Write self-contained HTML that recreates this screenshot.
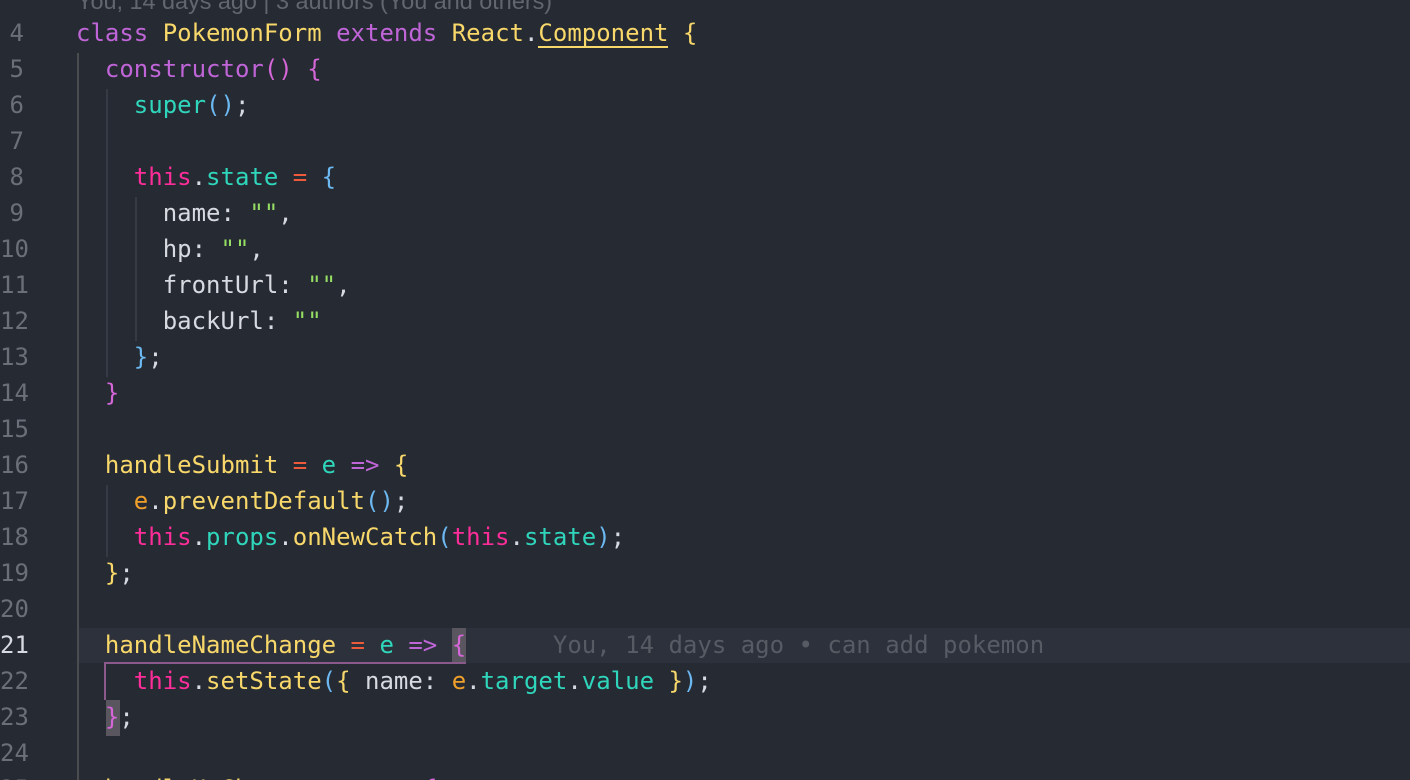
<!DOCTYPE html>
<html><head><meta charset="utf-8"><style>
html,body{margin:0;padding:0;background:#262a33;width:1410px;height:780px;overflow:hidden}
body{position:relative;font-family:"DejaVu Sans Mono","Liberation Mono",monospace;font-size:24px;color:#d7dae0}
.ln{position:absolute;left:0;width:24px;text-align:right;color:#6b6f78;height:36px;line-height:36px;font-family:"DejaVu Sans Mono","Liberation Mono",monospace}
.c{position:absolute;left:76px;height:36px;line-height:36px;white-space:pre;letter-spacing:0}
.k{color:#c065d8}.y{color:#f8d86a}.t{color:#2fd6bb}.p{color:#ff2d9a}.o{color:#ee5b3a}.e{color:#f0a02a}.s{color:#95de64}.b{color:#6cb8f0}.m{color:#d466d8}.w{color:#d7dae0}
.g{position:absolute;width:2px}
</style></head><body>
<div style="position:absolute;left:77px;top:628px;width:1333px;height:35px;background:#2d313b"></div>
<div style="position:absolute;left:77px;top:-17px;height:36px;line-height:36px;font-family:'Liberation Sans',sans-serif;font-size:23.4px;color:#62666f;white-space:pre">You, 14 days ago | 3 authors (You and others)</div>
<div class="g" style="left:77px;top:53px;height:727px;background:#4b4c50"></div>
<div class="g" style="left:106px;top:89px;height:288px;background:#363a44"></div>
<div class="g" style="left:106px;top:485px;height:72px;background:#363a44"></div>
<div class="g" style="left:135px;top:197px;height:144px;background:#363a44"></div>
<div style="position:absolute;left:452px;top:628px;width:14px;height:35px;background:#5a5660"></div>
<div style="position:absolute;left:106px;top:700px;width:14px;height:36px;background:#5a5660"></div>
<div style="position:absolute;left:104px;top:662px;width:362px;height:2px;background:#8a5a8c"></div>
<div style="position:absolute;left:104px;top:662px;width:2px;height:38px;background:#8a5a8c"></div>
<div style="position:absolute;left:538px;top:46px;width:130px;height:2px;background:#f8d86a"></div>

<div class="ln" style="top:15px">4</div><div class="c" style="top:15px"><span class="k">class</span> <span class="y">PokemonForm</span> <span class="k">extends</span> <span class="y">React</span>.<span class="y">Component</span> <span class="y">{</span></div>
<div class="ln" style="top:51px">5</div><div class="c" style="top:51px">  <span class="k">constructor</span><span class="m">()</span> <span class="m">{</span></div>
<div class="ln" style="top:87px">6</div><div class="c" style="top:87px">    <span class="t">super</span><span class="b">()</span>;</div>
<div class="ln" style="top:123px">7</div>
<div class="ln" style="top:159px">8</div><div class="c" style="top:159px">    <span class="p">this</span>.<span class="t">state</span> <span class="o">=</span> <span class="b">{</span></div>
<div class="ln" style="top:195px">9</div><div class="c" style="top:195px">      name: <span class="s">""</span>,</div>
<div class="ln" style="top:231px">10</div><div class="c" style="top:231px">      hp: <span class="s">""</span>,</div>
<div class="ln" style="top:267px">11</div><div class="c" style="top:267px">      frontUrl: <span class="s">""</span>,</div>
<div class="ln" style="top:303px">12</div><div class="c" style="top:303px">      backUrl: <span class="s">""</span></div>
<div class="ln" style="top:339px">13</div><div class="c" style="top:339px">    <span class="b">}</span>;</div>
<div class="ln" style="top:375px">14</div><div class="c" style="top:375px">  <span class="m">}</span></div>
<div class="ln" style="top:411px">15</div>
<div class="ln" style="top:447px">16</div><div class="c" style="top:447px">  <span class="y">handleSubmit</span> <span class="o">=</span> <span class="t">e</span> <span class="k">=&gt;</span> <span class="y">{</span></div>
<div class="ln" style="top:483px">17</div><div class="c" style="top:483px">    <span class="e">e</span>.<span class="y">preventDefault</span><span class="b">()</span>;</div>
<div class="ln" style="top:519px">18</div><div class="c" style="top:519px">    <span class="p">this</span>.<span class="t">props</span>.<span class="y">onNewCatch</span><span class="b">(</span><span class="p">this</span>.<span class="t">state</span><span class="b">)</span>;</div>
<div class="ln" style="top:555px">19</div><div class="c" style="top:555px">  <span class="y">}</span>;</div>
<div class="ln" style="top:591px">20</div>
<div class="ln" style="top:627px;color:#d7dae0">21</div><div class="c" style="top:627px">  <span class="y">handleNameChange</span> <span class="o">=</span> <span class="t">e</span> <span class="k">=&gt;</span> <span class="m">{</span>      <span style="color:#575b64">You, 14 days ago • can add pokemon</span></div>
<div class="ln" style="top:663px">22</div><div class="c" style="top:663px">    <span class="p">this</span>.<span class="y">setState</span><span class="b">(</span><span class="y">{</span> name: <span class="e">e</span>.<span class="t">target</span>.<span class="t">value</span> <span class="y">}</span><span class="b">)</span>;</div>
<div class="ln" style="top:699px">23</div><div class="c" style="top:699px">  <span class="m">}</span>;</div>
<div class="ln" style="top:735px">24</div>
<div class="ln" style="top:771px">25</div><div class="c" style="top:771px">  <span class="y">handleHpChange</span> <span class="o">=</span> <span class="t">e</span> <span class="k">=&gt;</span> <span class="m">{</span></div>
</body></html>
